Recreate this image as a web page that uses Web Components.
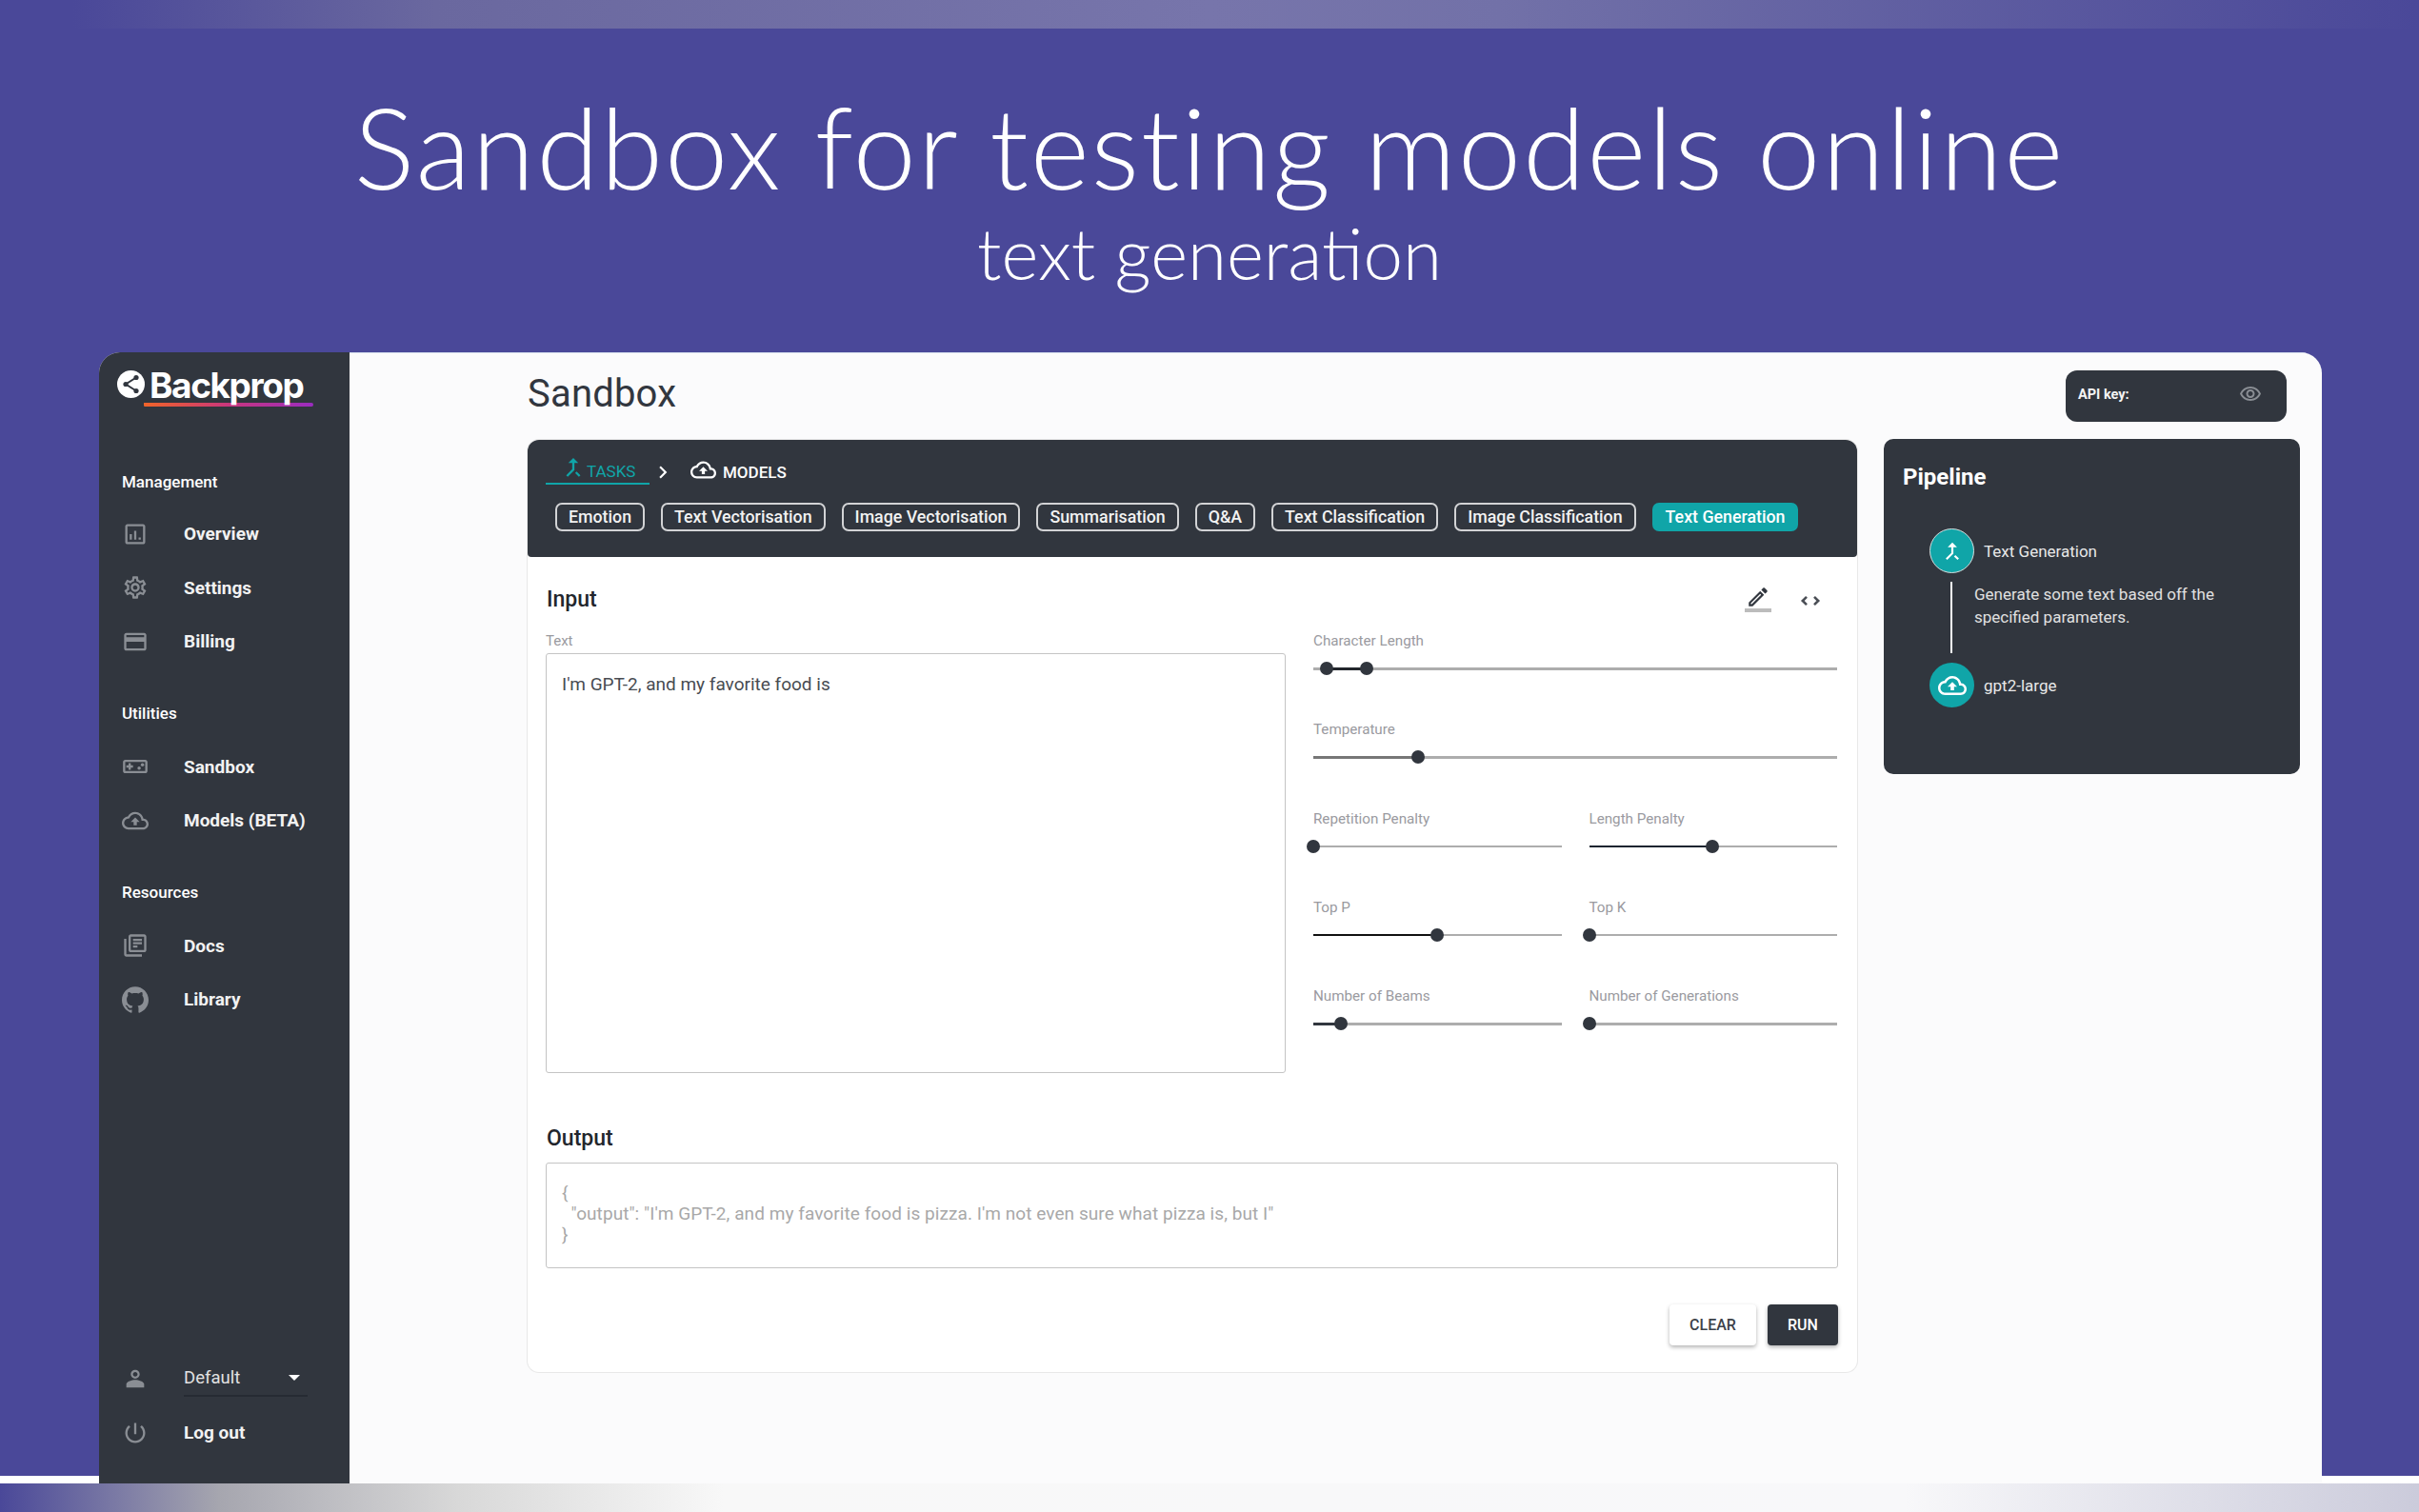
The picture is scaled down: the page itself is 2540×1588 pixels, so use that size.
<!DOCTYPE html>
<html lang="en">
<head>
<meta charset="utf-8">
<title>Sandbox for testing models online</title>
<style>
  html, body { margin: 0; background: #fff; font-family: Roboto, "Liberation Sans", sans-serif; }
  body { width: 2540px; height: 1588px; overflow: hidden; }
</style>
</head>
<body>
<promo-page>
  <span slot="title">Sandbox for testing models online</span>
  <span slot="subtitle">text generation</span>
  <app-window></app-window>
</promo-page>

<script>
const ICONS = {
  tasks: '<path d="M17 20.41L18.41 19 15 15.59 13.59 17 17 20.41zM7.5 8H11v5.59L5.59 19 7 20.41l6-6V8h3.5L12 3.5 7.5 8z"/>',
  cloud: '<path d="M19.35 10.04C18.67 6.59 15.64 4 12 4 9.11 4 6.6 5.64 5.35 8.04 2.34 8.36 0 10.91 0 14c0 3.31 2.69 6 6 6h13c2.76 0 5-2.24 5-5 0-2.64-2.05-4.78-4.65-4.96zM19 18H6c-2.21 0-4-1.79-4-4 0-2.05 1.53-3.76 3.56-3.97l1.07-.11.5-.95C8.08 7.14 9.94 6 12 6c2.62 0 4.88 1.86 5.39 4.43l.3 1.5 1.53.11c1.56.1 2.78 1.41 2.78 2.96 0 1.65-1.35 3-3 3zM8 13h2.55v3h2.9v-3H16l-4-4z"/>',
  poll: '<path d="M19 3H5c-1.1 0-2 .9-2 2v14c0 1.1.9 2 2 2h14c1.1 0 2-.9 2-2V5c0-1.1-.9-2-2-2zm0 16H5V5h14v14zM7 12h2v5H7zm4-3h2v8h-2zm4 6h2v2h-2z"/>',
  settings: '<path d="M19.43 12.98c.04-.32.07-.64.07-.98 0-.34-.03-.66-.07-.98l2.11-1.65c.19-.15.24-.42.12-.64l-2-3.46c-.09-.16-.26-.25-.44-.25-.06 0-.12.01-.17.03l-2.49 1c-.52-.4-1.08-.73-1.69-.98l-.38-2.65C14.46 2.18 14.25 2 14 2h-4c-.25 0-.46.18-.49.42l-.38 2.65c-.61.25-1.17.59-1.69.98l-2.49-1c-.06-.02-.12-.03-.18-.03-.17 0-.34.09-.43.25l-2 3.46c-.13.22-.07.49.12.64l2.11 1.65c-.04.32-.07.65-.07.98 0 .33.03.66.07.98l-2.11 1.65c-.19.15-.24.42-.12.64l2 3.46c.09.16.26.25.44.25.06 0 .12-.01.17-.03l2.49-1c.52.4 1.08.73 1.69.98l.38 2.65c.03.24.24.42.49.42h4c.25 0 .46-.18.49-.42l.38-2.65c.61-.25 1.17-.59 1.69-.98l2.49 1c.06.02.12.03.18.03.17 0 .34-.09.43-.25l2-3.46c.12-.22.07-.49-.12-.64l-2.11-1.65zm-1.98-1.71c.04.31.05.52.05.73 0 .21-.02.43-.05.73l-.14 1.13.89.7 1.08.84-.7 1.21-1.27-.51-1.04-.42-.9.68c-.43.32-.84.56-1.25.73l-1.06.43-.16 1.13-.2 1.35h-1.4l-.19-1.35-.16-1.13-1.06-.43c-.43-.18-.83-.41-1.23-.71l-.91-.7-1.06.43-1.27.51-.7-1.21 1.08-.84.89-.7-.14-1.13c-.03-.31-.05-.54-.05-.74s.02-.43.05-.73l.14-1.13-.89-.7-1.08-.84.7-1.21 1.27.51 1.04.42.9-.68c.43-.32.84-.56 1.25-.73l1.06-.43.16-1.13.2-1.35h1.39l.19 1.35.16 1.13 1.06.43c.43.18.83.41 1.23.71l.91.7 1.06-.43 1.27-.51.7 1.21-1.07.85-.89.7.14 1.13zM12 8c-2.21 0-4 1.79-4 4s1.79 4 4 4 4-1.79 4-4-1.79-4-4-4zm0 6c-1.1 0-2-.9-2-2s.9-2 2-2 2 .9 2 2-.9 2-2 2z"/>',
  card: '<path d="M20 4H4c-1.11 0-1.99.89-1.99 2L2 18c0 1.11.89 2 2 2h16c1.11 0 2-.89 2-2V6c0-1.11-.89-2-2-2zm0 14H4v-6h16v6zm0-10H4V6h16v2z"/>',
  game: '<path d="M21 6H3c-1.1 0-2 .9-2 2v8c0 1.1.9 2 2 2h18c1.1 0 2-.9 2-2V8c0-1.1-.9-2-2-2zm0 10H3V8h18v8zM6 15h2v-2h2v-2H8V9H6v2H4v2h2z"/><circle cx="15.5" cy="13.5" r="1.5"/><circle cx="18.5" cy="10.5" r="1.5"/>',
  docs: '<path d="M4 6H2v14c0 1.1.9 2 2 2h14v-2H4V6zm16-4H8c-1.1 0-2 .9-2 2v12c0 1.1.9 2 2 2h12c1.1 0 2-.9 2-2V4c0-1.1-.9-2-2-2zm0 14H8V4h12v12zM10 9h8v2h-8zm0 3h4v2h-4zm0-6h8v2h-8z"/>',
  github: '<path d="M12 .297c-6.63 0-12 5.373-12 12 0 5.303 3.438 9.8 8.205 11.385.6.113.82-.258.82-.577 0-.285-.01-1.04-.015-2.04-3.338.724-4.042-1.61-4.042-1.61C4.422 18.07 3.633 17.7 3.633 17.7c-1.087-.744.084-.729.084-.729 1.205.084 1.838 1.236 1.838 1.236 1.07 1.835 2.809 1.305 3.495.998.108-.776.417-1.305.76-1.605-2.665-.3-5.466-1.332-5.466-5.93 0-1.31.465-2.38 1.235-3.22-.135-.303-.54-1.523.105-3.176 0 0 1.005-.322 3.3 1.23.96-.267 1.98-.399 3-.405 1.02.006 2.04.138 3 .405 2.28-1.552 3.285-1.23 3.285-1.23.645 1.653.24 2.873.12 3.176.765.84 1.23 1.91 1.23 3.22 0 4.61-2.805 5.625-5.475 5.92.42.36.81 1.096.81 2.22 0 1.606-.015 2.896-.03 3.406 0 .315.21.69.825.57C20.565 22.092 24 17.592 24 12.297c0-6.627-5.373-12-12-12"/>',
  person: '<path d="M12 5.9c1.16 0 2.1.94 2.1 2.1s-.94 2.1-2.1 2.1S9.9 9.16 9.9 8s.94-2.1 2.1-2.1M12 4C9.79 4 8 5.79 8 8s1.79 4 4 4 4-1.79 4-4-1.79-4-4-4zm0 9c-2.67 0-8 1.34-8 4v3h16v-3c0-2.66-5.33-4-8-4z"/>',
  power: '<path d="M13 3h-2v10h2V3zm4.83 2.17l-1.42 1.42C17.99 7.86 19 9.81 19 12c0 3.87-3.13 7-7 7s-7-3.13-7-7c0-2.19 1.01-4.14 2.58-5.42L6.17 5.17C4.23 6.82 3 9.26 3 12c0 4.97 4.03 9 9 9s9-4.03 9-9c0-2.74-1.23-5.18-3.17-6.83z"/>',
  eye: '<path d="M12 6c3.79 0 7.17 2.13 8.82 5.5C19.17 14.87 15.79 17 12 17s-7.17-2.13-8.82-5.5C4.83 8.13 8.21 6 12 6m0-2C7 4 2.73 7.11 1 11.5 2.73 15.89 7 19 12 19s9.27-3.11 11-7.5C21.27 7.11 17 4 12 4zm0 5c1.38 0 2.5 1.12 2.5 2.5S13.38 14 12 14s-2.5-1.12-2.5-2.5S10.62 9 12 9m0-2c-2.48 0-4.5 2.02-4.5 4.5S9.52 16 12 16s4.5-2.02 4.5-4.5S14.48 7 12 7z"/>',
  pencil: '<path d="M14.06 9.02l.92.92L5.92 19H5v-.92l9.06-9.06M17.66 3c-.25 0-.51.1-.7.29l-1.83 1.83 3.75 3.75 1.83-1.83c.39-.39.39-1.02 0-1.41l-2.34-2.34c-.2-.2-.45-.29-.71-.29zm-3.6 3.19L3 17.25V21h3.75L17.81 9.94l-3.75-3.75z"/>',
  code: '<path d="M8 7.8L3.8 12 8 16.2" fill="none" stroke="currentColor" stroke-width="2.6"/><path d="M16 7.8l4.2 4.2-4.2 4.2" fill="none" stroke="currentColor" stroke-width="2.6"/>',
  chevron: '<path d="M8.59 16.59L13.17 12 8.59 7.41 10 6l6 6-6 6-1.41-1.41z"/>'
};

class UiIcon extends HTMLElement {
  connectedCallback() {
    const size = this.getAttribute('size') || 24;
    this.attachShadow({ mode: 'open' }).innerHTML = `
      <style>
        :host { display: inline-flex; width: ${size}px; height: ${size}px; flex: none; }
        svg { width: 100%; height: 100%; fill: currentColor; display: block; }
      </style>
      <svg viewBox="0 0 24 24">${ICONS[this.getAttribute('name')]}</svg>`;
  }
}

class PromoPage extends HTMLElement {
  connectedCallback() {
    this.attachShadow({ mode: 'open' }).innerHTML = `
      <style>
        :host { display: block; width: 2540px; height: 1588px; position: relative; color: #fff; }
        .band { height: 30px; background: linear-gradient(90deg, #4a4899 3%, #6a689f 18%, #7775ab 50%, #7271a8 62%, #4a4899 100%); }
        .stage { height: 1520px; background: #4a4899; display: flex; flex-direction: column; }
        header { height: 340px; flex: none; text-align: center; font-family: Lato, "Open Sans", sans-serif; font-weight: 300; }
        h1 { margin: 0; padding-top: 58px; font-size: 119px; line-height: 130px; font-weight: 300; letter-spacing: 1.85px; }
        h2 { margin: 0; padding-top: 2px; font-size: 74.5px; line-height: 90px; font-weight: 300; }
        .bottom { position: absolute; left: 0; right: 0; bottom: 0; height: 30px;
          background: linear-gradient(90deg, #4a4899 0, #a6a6af 230px, #d8d8d8 480px, #f8f8f8 760px, #f8f8fa 2000px, #cbcbdb 100%); }
        ::slotted(app-window) { flex: 1; margin: 0 102px -8px 104px; position: relative; z-index: 1; }
      </style>
      <div class="band"></div>
      <div class="stage">
        <header>
          <h1><slot name="title"></slot></h1>
          <h2><slot name="subtitle"></slot></h2>
        </header>
        <slot></slot>
      </div>
      <div class="bottom"></div>`;
  }
}

class AppWindow extends HTMLElement {
  connectedCallback() {
    this.attachShadow({ mode: 'open' }).innerHTML = `
      <style>
        :host { display: flex; border-radius: 22px 22px 0 0; overflow: hidden; background: #fbfbfc; }
        app-sidebar { width: 263px; flex: none; }
        main { flex: 1; min-width: 0; padding: 18px 23px 0 187px; border-top: 1px solid #d6dfee;
          display: grid; grid-template-columns: 1396px 437px; column-gap: 28px; grid-template-rows: 54px auto;
          row-gap: 19px; align-content: start; color: #32373f; }
        h1 { margin: 0; font-size: 40px; line-height: 50px; font-weight: 400; letter-spacing: .2px; }
        api-key { justify-self: end; margin-right: 14px; }
        pipeline-panel { margin-top: -1px; }
      </style>
      <app-sidebar></app-sidebar>
      <main>
        <h1>Sandbox</h1>
        <api-key></api-key>
        <sandbox-card></sandbox-card>
        <pipeline-panel></pipeline-panel>
      </main>`;
  }
}

class AppSidebar extends HTMLElement {
  connectedCallback() {
    this.attachShadow({ mode: 'open' }).innerHTML = `
      <style>
        :host { display: flex; flex-direction: column; background: #31363e; color: #fff; }
        .logo { height: 108px; box-sizing: border-box; padding: 17px 0 0 19px; display: flex; align-items: flex-start; gap: 5px; position: relative; }
        .logo svg { width: 29px; height: 29px; margin-top: 2px; flex: none; }
        .logo b { font-family: Inter, Roboto, sans-serif; font-size: 37px; line-height: 36px; font-weight: 700; letter-spacing: -1.4px; position: relative; z-index: 1; }
        .logo i { position: absolute; left: 47px; top: 53px; width: 178px; height: 4px; border-radius: 0 3px 3px 2px; background: linear-gradient(90deg, #f0642a, #e0504a 22%, #c9367e 50%, #9a2cc0); }
        h3 { margin: 0; height: 56px; line-height: 56px; padding-left: 24px; font-size: 17px; font-weight: 500; }
        section { margin-bottom: 19px; }
        section.first h3 { height: 54.4px; }
        footer { margin-top: auto; padding-bottom: 25px; }
      </style>
      <div class="logo">
        <svg viewBox="0 0 29 29"><circle cx="14.5" cy="14.5" r="14.5" fill="#fff"/><path d="M20 7.5L9 14.5l11 7" fill="none" stroke="#31363e" stroke-width="2"/><circle cx="20" cy="7.5" r="2.6" fill="#31363e"/><circle cx="9" cy="14.5" r="2.6" fill="#31363e"/><circle cx="20" cy="21.5" r="2.6" fill="#31363e"/></svg>
        <b>Backprop</b><i></i>
      </div>
      <section class="first">
        <h3>Management</h3>
        <nav-item icon="poll">Overview</nav-item>
        <nav-item icon="settings">Settings</nav-item>
        <nav-item icon="card">Billing</nav-item>
      </section>
      <section>
        <h3>Utilities</h3>
        <nav-item icon="game">Sandbox</nav-item>
        <nav-item icon="cloud">Models (BETA)</nav-item>
      </section>
      <section>
        <h3>Resources</h3>
        <nav-item icon="docs">Docs</nav-item>
        <nav-item icon="github">Library</nav-item>
      </section>
      <footer>
        <nav-item icon="person" kind="select">Default</nav-item>
        <nav-item icon="power">Log out</nav-item>
      </footer>`;
  }
}

class NavItem extends HTMLElement {
  connectedCallback() {
    const select = this.getAttribute('kind') === 'select';
    this.attachShadow({ mode: 'open' }).innerHTML = `
      <style>
        :host { display: flex; align-items: center; height: 56.5px; padding-left: 24px; font-size: 19px; font-weight: 700; color: #f2f2f2; }
        ui-icon { color: #8a8e94; margin-right: 37px; }
        .sel { width: 130px; height: 38px; box-sizing: border-box; border-bottom: 2px solid #262b33; display: flex; align-items: center; justify-content: space-between;
          font-size: 18.5px; font-weight: 400; color: #e2e2e2; padding: 0 8px 0 0; }
        .sel i { width: 0; height: 0; border: 6px solid transparent; border-top: 6px solid #fff; border-bottom: 0; }
      </style>
      <ui-icon name="${this.getAttribute('icon')}" size="28"></ui-icon>
      ${select ? '<div class="sel"><span><slot></slot></span><i></i></div>' : '<slot></slot>'}`;
  }
}

class ApiKey extends HTMLElement {
  connectedCallback() {
    this.attachShadow({ mode: 'open' }).innerHTML = `
      <style>
        :host { display: flex; align-items: center; justify-content: space-between; width: 232px; height: 54px; box-sizing: border-box;
          padding: 0 26px 4px 13px; background: #31363e; border-radius: 12px; color: #f4f4f4; font-size: 14.5px; font-weight: 700; }
        ui-icon { color: #8a8e94; }
      </style>
      API key:
      <ui-icon name="eye" size="24"></ui-icon>`;
  }
}

class TabChip extends HTMLElement {
  connectedCallback() {
    this.attachShadow({ mode: 'open' }).innerHTML = `
      <style>
        :host { display: inline-flex; align-items: center; height: 30px; box-sizing: border-box; padding: 0 12px; border: 2px solid #d2d3d5; border-radius: 7px;
          font-size: 17.8px; font-weight: 500; color: #f2f2f2; white-space: nowrap; }
        :host([active]) { background: #10a5a8; border-color: #10a5a8; color: #fff; }
      </style>
      <slot></slot>`;
  }
}

class TaskBar extends HTMLElement {
  connectedCallback() {
    this.attachShadow({ mode: 'open' }).innerHTML = `
      <style>
        :host { display: block; height: 123px; box-sizing: border-box; background: #31363e; border-radius: 12px 12px 4px 4px; padding: 21px 0 0 19px; color: #fff; }
        .steps { display: flex; align-items: center; height: 26px; font-size: 17px; font-weight: 500; }
        .tab { display: flex; align-items: center; width: 109px; height: 26px; box-sizing: border-box; padding-left: 15px; color: #10a5a8; border-bottom: 2px solid #10a5a8; font-weight: 400; position: relative; }
        .tab ui-icon { margin-top: -8px; }
        .next { margin: 0 16px 0 1px; }
        .models { display: flex; align-items: center; gap: 7px; height: 26px; }
        .models ui-icon { margin-top: -6px; }
        .chips { display: flex; gap: 17px; margin: 18.5px 0 0 10px; }
      </style>
      <div class="steps">
        <div class="tab"><ui-icon name="tasks" size="28"></ui-icon>TASKS</div>
        <ui-icon class="next" name="chevron" size="26"></ui-icon>
        <div class="models"><ui-icon name="cloud" size="27"></ui-icon>MODELS</div>
      </div>
      <div class="chips">
        <tab-chip>Emotion</tab-chip>
        <tab-chip>Text Vectorisation</tab-chip>
        <tab-chip>Image Vectorisation</tab-chip>
        <tab-chip>Summarisation</tab-chip>
        <tab-chip>Q&amp;A</tab-chip>
        <tab-chip>Text Classification</tab-chip>
        <tab-chip>Image Classification</tab-chip>
        <tab-chip active>Text Generation</tab-chip>
      </div>`;
  }
}

class RangeSlider extends HTMLElement {
  connectedCallback() {
    const from = this.getAttribute('from');
    const to = this.getAttribute('to');
    const start = from === null ? 0 : +from;
    const fill = this.getAttribute('fill') || '#31363e';
    this.attachShadow({ mode: 'open' }).innerHTML = `
      <style>
        :host { display: block; height: 93.25px; font-size: 15.2px; line-height: 23px; color: #9a9aa0; }
        .track { height: 2.5px; margin-top: 16px; background: #adadad; position: relative; }
        .fill { position: absolute; top: 0; bottom: 0; left: ${start}%; width: ${to - start}%; background: ${fill}; }
        .thumb { position: absolute; top: -6px; width: 14px; height: 14px; margin-left: -7px; border-radius: 50%; background: #31363e; }
      </style>
      <slot></slot>
      <div class="track">
        <div class="fill"></div>
        ${from !== null ? `<div class="thumb" style="left:${from}%"></div>` : ''}
        <div class="thumb" style="left:${to}%"></div>
      </div>`;
  }
}

class SandboxCard extends HTMLElement {
  connectedCallback() {
    this.attachShadow({ mode: 'open' }).innerHTML = `
      <style>
        :host { display: block; height: 979px; box-sizing: border-box; background: #fff; border-radius: 12px; box-shadow: 0 0 0 1px #e8e8e8; }
        .body { padding: 20px 20px 0 19px; }
        .head { display: flex; align-items: center; height: 47px; margin-bottom: 10px; }
        h2 { margin: 0; padding: 2px 0 0 1px; font-size: 23px; font-weight: 500; color: #22262c; }
        .outhead h2 { padding-top: 0; }
        .tools { margin-left: auto; display: flex; align-items: center; color: #31363e; }
        .pen { display: flex; flex-direction: column; align-items: center; width: 28px; margin-right: 29px; margin-top: -1px; }
        .pen i { width: 28px; height: 4px; background: #bcbcbc; margin-top: -1px; }
        .code { margin-right: 17px; margin-top: 5px; color: #4a4e55; }
        .columns { display: grid; grid-template-columns: 777px 550px; column-gap: 29px; }
        label { display: block; font-size: 15px; line-height: 22px; color: #9a9aa0; margin-bottom: 2px; }
        .box { box-sizing: border-box; border: 1.5px solid #c4c4c4; border-radius: 3px; font-size: 19px; }
        .input { height: 441px; padding: 21px 16px; line-height: 21px; color: #484c52; }
        .sliders { display: grid; grid-template-columns: 260.5px 260.5px; column-gap: 29px; }
        .wide { grid-column: 1 / -1; }
        .outhead { height: 48px; margin-top: 43px; margin-bottom: 1.5px; display: flex; align-items: center; }
        .output { height: 111px; padding: 20.5px 16px; line-height: 22px; color: #a8a8a8; white-space: pre; letter-spacing: .07px; }
        .actions { display: flex; justify-content: flex-end; gap: 12px; margin-top: 38px; }
        button { font: 500 16px Roboto, sans-serif; height: 43px; border: 0; border-radius: 4px; cursor: pointer; box-shadow: 0 2px 4px rgba(0,0,0,.3); }
        .clear { width: 91px; background: #fff; color: #3d4249; }
        .run { width: 74px; background: #31363e; color: #fff; }
      </style>
      <task-bar></task-bar>
      <div class="body">
        <div class="head">
          <h2>Input</h2>
          <div class="tools">
            <div class="pen"><ui-icon name="pencil" size="26"></ui-icon><i></i></div>
            <ui-icon class="code" name="code" size="24"></ui-icon>
          </div>
        </div>
        <div class="columns">
          <div>
            <label>Text</label>
            <div class="box input">I'm GPT-2, and my favorite food is</div>
          </div>
          <div class="sliders">
            <range-slider class="wide" from="2.5" to="10.2" fill="#22262c">Character Length</range-slider>
            <range-slider class="wide" to="20" fill="#777">Temperature</range-slider>
            <range-slider to="0">Repetition Penalty</range-slider>
            <range-slider to="49.8" fill="#1c2530">Length Penalty</range-slider>
            <range-slider to="50" fill="#111">Top P</range-slider>
            <range-slider to="0">Top K</range-slider>
            <range-slider to="11">Number of Beams</range-slider>
            <range-slider to="0">Number of Generations</range-slider>
          </div>
        </div>
        <div class="outhead"><h2>Output</h2></div>
        <div class="box output">{
  "output": "I'm GPT-2, and my favorite food is pizza. I'm not even sure what pizza is, but I"
}</div>
        <div class="actions">
          <button class="clear">CLEAR</button>
          <button class="run">RUN</button>
        </div>
      </div>`;
  }
}

class PipelineStep extends HTMLElement {
  connectedCallback() {
    this.attachShadow({ mode: 'open' }).innerHTML = `
      <style>
        :host { display: flex; align-items: center; gap: 10px; font-size: 17px; color: #e8e8e8; }
        .dot { width: 47px; height: 47px; box-sizing: border-box; border-radius: 50%; background: #10a5a8; display: flex; align-items: center; justify-content: center; color: #fff; }
        :host([ring]) .dot { border: 1.5px solid #d5dede; }
      </style>
      <div class="dot"><ui-icon name="${this.getAttribute('icon')}" size="${this.getAttribute('size')}"></ui-icon></div>
      <slot></slot>`;
  }
}

class PipelinePanel extends HTMLElement {
  connectedCallback() {
    this.attachShadow({ mode: 'open' }).innerHTML = `
      <style>
        :host { display: block; height: 352px; box-sizing: border-box; padding: 23px 20px; background: #31363e; border-radius: 10px; color: #fff; align-self: start; }
        h2 { margin: 0 0 37px; font-size: 24px; line-height: 34px; font-weight: 700; }
        .flow { margin-left: 28px; }
        .link { display: flex; height: 75px; margin: 9px 0 10px 22px; }
        .link i { width: 2px; background: #fff; flex: none; }
        p { margin: 0 0 0 23px; font-size: 17px; line-height: 24px; color: #e0e0e0; transform: translateY(1px); }
      </style>
      <h2>Pipeline</h2>
      <div class="flow">
        <pipeline-step icon="tasks" size="26" ring>Text Generation</pipeline-step>
        <div class="link"><i></i><p>Generate some text based off the<br>specified parameters.</p></div>
        <pipeline-step icon="cloud" size="30">gpt2-large</pipeline-step>
      </div>`;
  }
}

customElements.define('ui-icon', UiIcon);
customElements.define('nav-item', NavItem);
customElements.define('app-sidebar', AppSidebar);
customElements.define('api-key', ApiKey);
customElements.define('tab-chip', TabChip);
customElements.define('task-bar', TaskBar);
customElements.define('range-slider', RangeSlider);
customElements.define('pipeline-step', PipelineStep);
customElements.define('pipeline-panel', PipelinePanel);
customElements.define('sandbox-card', SandboxCard);
customElements.define('app-window', AppWindow);
customElements.define('promo-page', PromoPage);
</script>
</body>
</html>
